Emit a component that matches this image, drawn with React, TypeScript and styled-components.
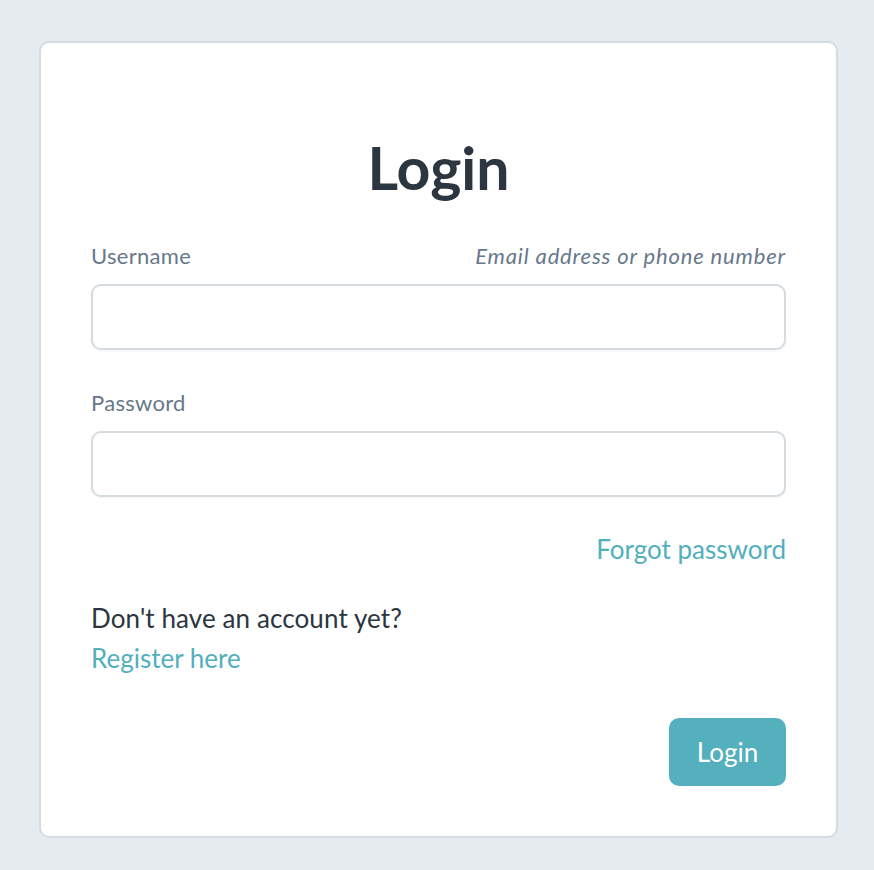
import React from "react";
import styled, { createGlobalStyle } from "styled-components";

const GlobalStyle = createGlobalStyle`
  html, body {
    margin: 0;
    padding: 0;
    background-color: #e6ebef;
  }
  body {
    font-family: Lato, "Open Sans", sans-serif;
  }
  * {
    box-sizing: border-box;
  }
`;

const Page = styled.div`
  display: flex;
  padding: 41px 0 32px 39px;
`;

const Card = styled.form`
  width: 799px;
  background-color: #ffffff;
  border: 2px solid #d4dbe1;
  border-radius: 10px;
  padding: 85px 50px 50px;
  display: flex;
  flex-direction: column;
`;

const Title = styled.h1`
  margin: 0 0 36px;
  text-align: center;
  font-size: 59px;
  font-weight: 700;
  line-height: 80px;
  color: #2b3640;
`;

const Field = styled.div<{ $gap?: number }>`
  display: flex;
  flex-direction: column;
  margin-bottom: ${(p) => p.$gap ?? 41}px;
`;

const LabelRow = styled.div`
  display: flex;
  justify-content: space-between;
  align-items: baseline;
  margin-bottom: 16px;
`;

const Label = styled.label`
  font-size: 22px;
  line-height: 24px;
  letter-spacing: 0.3px;
  color: #66788a;
`;

const Hint = styled.span`
  font-size: 22px;
  line-height: 24px;
  letter-spacing: 0.85px;
  font-style: italic;
  color: #66788a;
`;

const Input = styled.input`
  height: 66px;
  width: 100%;
  border: 2px solid #d4dbe1;
  border-radius: 10px;
  padding: 0 18px;
  font-size: 20px;
  font-family: inherit;
  color: #2b3640;
  box-shadow: 0 1px 2px rgba(43, 54, 64, 0.06);
  outline: none;
`;

const ForgotRow = styled.div`
  display: flex;
  justify-content: flex-end;
  margin-bottom: 29px;
`;

const Link = styled.a`
  font-size: 26px;
  line-height: 40px;
  color: #52afbd;
  text-decoration: none;
  cursor: pointer;
`;

const Register = styled.div`
  display: flex;
  flex-direction: column;
  align-items: flex-start;
`;

const Prompt = styled.span`
  font-size: 26px;
  line-height: 40px;
  letter-spacing: 0.1px;
  color: #2b3640;
`;

const Actions = styled.div`
  display: flex;
  justify-content: flex-end;
  margin-top: 40px;
`;

const Button = styled.button`
  height: 68px;
  width: 117px;
  border: none;
  border-radius: 10px;
  background-color: #54b0bd;
  color: #ffffff;
  font-family: inherit;
  font-size: 26px;
  cursor: pointer;
`;

export default function App() {
  return (
    <>
      <GlobalStyle />
      <Page>
        <Card onSubmit={(e) => e.preventDefault()}>
          <Title>Login</Title>
          <Field>
            <LabelRow>
              <Label htmlFor="username">Username</Label>
              <Hint>Email address or phone number</Hint>
            </LabelRow>
            <Input id="username" type="text" />
          </Field>
          <Field $gap={32}>
            <LabelRow>
              <Label htmlFor="password">Password</Label>
            </LabelRow>
            <Input id="password" type="password" />
          </Field>
          <ForgotRow>
            <Link>Forgot password</Link>
          </ForgotRow>
          <Register>
            <Prompt>Don't have an account yet?</Prompt>
            <Link>Register here</Link>
          </Register>
          <Actions>
            <Button type="submit">Login</Button>
          </Actions>
        </Card>
      </Page>
    </>
  );
}
